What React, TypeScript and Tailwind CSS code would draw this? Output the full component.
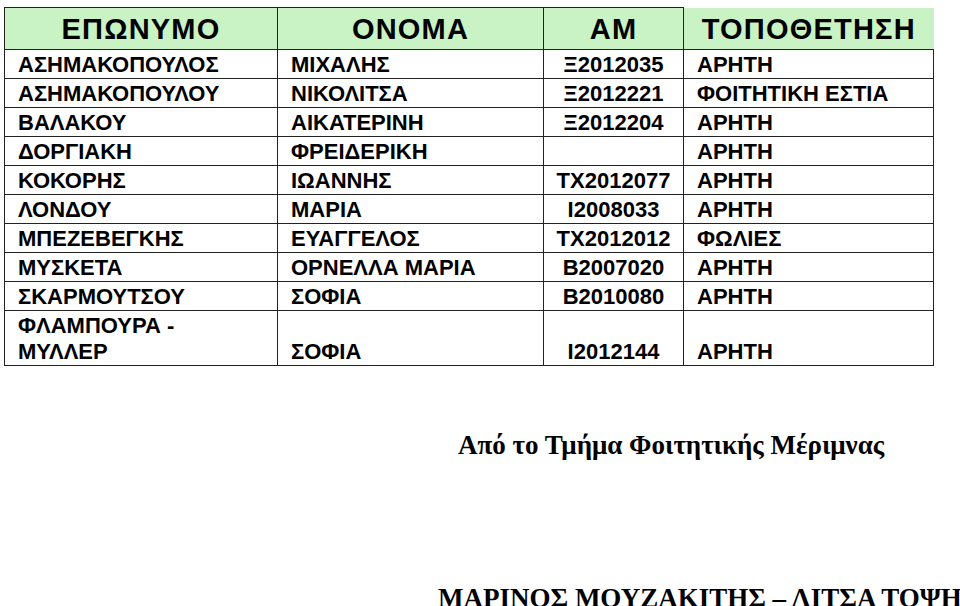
import React from "react";

const rows: [string, string, string, string][] = [
  ["ΑΣΗΜΑΚΟΠΟΥΛΟΣ", "ΜΙΧΑΛΗΣ", "Ξ2012035", "ΑΡΗΤΗ"],
  ["ΑΣΗΜΑΚΟΠΟΥΛΟΥ", "ΝΙΚΟΛΙΤΣΑ", "Ξ2012221", "ΦΟΙΤΗΤΙΚΗ ΕΣΤΙΑ"],
  ["ΒΑΛΑΚΟΥ", "ΑΙΚΑΤΕΡΙΝΗ", "Ξ2012204", "ΑΡΗΤΗ"],
  ["ΔΟΡΓΙΑΚΗ", "ΦΡΕΙΔΕΡΙΚΗ", "", "ΑΡΗΤΗ"],
  ["ΚΟΚΟΡΗΣ", "ΙΩΑΝΝΗΣ", "ΤΧ2012077", "ΑΡΗΤΗ"],
  ["ΛΟΝΔΟΥ", "ΜΑΡΙΑ", "Ι2008033", "ΑΡΗΤΗ"],
  ["ΜΠΕΖΕΒΕΓΚΗΣ", "ΕΥΑΓΓΕΛΟΣ", "ΤΧ2012012", "ΦΩΛΙΕΣ"],
  ["ΜΥΣΚΕΤΑ", "ΟΡΝΕΛΛΑ ΜΑΡΙΑ", "Β2007020", "ΑΡΗΤΗ"],
  ["ΣΚΑΡΜΟΥΤΣΟΥ", "ΣΟΦΙΑ", "Β2010080", "ΑΡΗΤΗ"],
];

const cell = "border border-[#222] align-bottom leading-[26px] p-0";
const head =
  "border border-[#222] align-bottom leading-[36px] pb-[2px] font-bold text-center tracking-[1.2px]";

export default function App() {
  return (
    <div className="w-[960px] h-[606px] overflow-hidden bg-white text-black">
      <div className="pt-[7px] pl-[4px]">
        <table
          className="table-fixed border-collapse w-[929px] font-bold text-[22px]"
          style={{ fontFamily: '"Liberation Sans", Arial, sans-serif' }}
        >
          <colgroup>
            <col className="w-[273px]" />
            <col className="w-[266px]" />
            <col className="w-[140px]" />
            <col className="w-[250px]" />
          </colgroup>
          <thead>
            <tr className="h-[42px] bg-[#c9f3c4] text-[29px]">
              <th className={head}>ΕΠΩΝΥΜΟ</th>
              <th className={head}>ΟΝΟΜΑ</th>
              <th className={head}>ΑΜ</th>
              <th className={`${head} border-t-0 border-r-0`}>ΤΟΠΟΘΕΤΗΣΗ</th>
            </tr>
          </thead>
          <tbody>
            {rows.map((r, i) => (
              <tr key={i} className="h-[29px]">
                <td className={`${cell} pl-[13px] whitespace-nowrap`}>{r[0]}</td>
                <td className={`${cell} pl-[13px] whitespace-nowrap`}>{r[1]}</td>
                <td className={`${cell} text-center whitespace-nowrap`}>{r[2]}</td>
                <td className={`${cell} pl-[13px] whitespace-nowrap`}>{r[3]}</td>
              </tr>
            ))}
            <tr className="h-[55px]">
              <td className={`${cell} pl-[13px]`}>
                ΦΛΑΜΠΟΥΡΑ -<br />ΜΥΛΛΕΡ
              </td>
              <td className={`${cell} pl-[13px]`}>ΣΟΦΙΑ</td>
              <td className={`${cell} text-center`}>Ι2012144</td>
              <td className={`${cell} pl-[13px]`}>ΑΡΗΤΗ</td>
            </tr>
          </tbody>
        </table>
      </div>
      <div
        className="flex flex-col font-bold whitespace-nowrap text-[27px] leading-[32px]"
        style={{ fontFamily: '"Liberation Serif", "Times New Roman", serif' }}
      >
        <div className="pl-[458px] mt-[63px]">Από το Τμήμα Φοιτητικής Μέριμνας</div>
        <div className="pl-[438px] mt-[121px]">ΜΑΡΙΝΟΣ ΜΟΥΖΑΚΙΤΗΣ – ΛΙΤΣΑ ΤΟΨΗ</div>
      </div>
    </div>
  );
}
